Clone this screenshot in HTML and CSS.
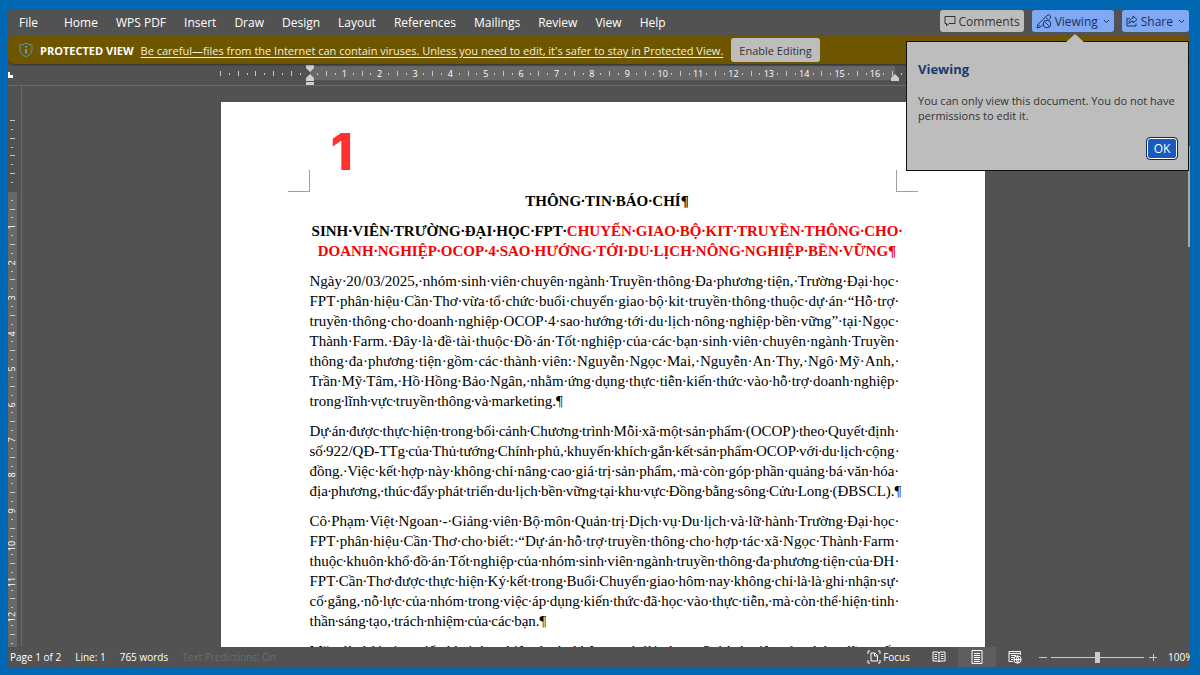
FILE: index.html
```html
<!DOCTYPE html>
<html lang="vi">
<head>
    <meta charset="UTF-8">
    <meta name="viewport" content="width=device-width, initial-scale=1.0">
    <title>Word - Protected View</title>
    <link rel="stylesheet" href="styles.css">
</head>
<body>
    <div class="app">
        <header class="menubar">
            <nav class="tabs">
                <button class="tab tab-file">File</button>
                <button class="tab">Home</button>
                <button class="tab">WPS PDF</button>
                <button class="tab">Insert</button>
                <button class="tab">Draw</button>
                <button class="tab">Design</button>
                <button class="tab">Layout</button>
                <button class="tab">References</button>
                <button class="tab">Mailings</button>
                <button class="tab">Review</button>
                <button class="tab">View</button>
                <button class="tab">Help</button>
            </nav>
            <div class="actions">
                <button class="action">
                    <svg width="12" height="12" viewBox="0 0 12 12"><path d="M1 1.5h10v7H5L2.5 11V8.500H1z"/></svg>
                    Comments
                </button>
                <button class="action blue">
                    <svg width="16" height="16" viewBox="0 0 16 16"><path d="M7 11.500 4.500 14 1 15l1-3.500L11 2.500q1.500-1.500 3 0t0 3L13 6.500M2 11.500 4.500 14M9.500 4l2.500 2.500"/><circle cx="11" cy="11" r="3.800"/><path d="m8.400 8.400 5.200 5.200"/></svg>
                    Viewing
                    <svg class="chevron" width="7" height="7" viewBox="0 0 7 7"><path d="M1 2l2.500 2.500L6 2"/></svg>
                </button>
                <button class="action blue">
                    <svg width="12" height="12" viewBox="0 0 12 12"><path d="M3.500 3.500H1v7.500h9V8.500M7 1l4 3.500L7 8V6Q4.500 6 3 8.500 3.500 3.500 7 3z"/></svg>
                    Share
                    <svg class="chevron" width="7" height="7" viewBox="0 0 7 7"><path d="M1 2l2.500 2.500L6 2"/></svg>
                </button>
                <div class="callout" role="dialog" aria-labelledby="callout-title">
                    <svg class="callout-arrow" width="20" height="9" viewBox="0 0 20 9"><path d="M0 9 10 0l10 9z"/></svg>
                    <h2 class="callout-title" id="callout-title">Viewing</h2>
                    <p class="callout-text">You can only view this document. You do not have permissions to edit it.</p>
                    <button class="ok">OK</button>
                </div>
            </div>
        </header>

        <div class="protected">
            <svg class="shield" width="14" height="16" viewBox="0 0 14 16"><path d="M7 1q3 2 6 2v5q0 4.500-6 7-6-2.500-6-7V3q3 0 6-2z"/><path class="shield-i" d="M7 7v4.500M7 4v1.500"/></svg>
            <strong class="protected-title">PROTECTED VIEW</strong>
            <a class="protected-link" href="#">Be careful—files from the Internet can contain viruses. Unless you need to edit, it's safer to stay in Protected View.</a>
            <button class="enable">Enable Editing</button>
        </div>

        <div class="top-ruler">
            <div class="tab-stop"></div>
            <div class="ruler-track">
                <div class="ruler-active"></div>
                <div class="ruler-marks" id="hruler"></div>
                <svg class="indent indent-left" width="10" height="20" viewBox="0 0 10 20"><path d="M1 0h8v3L5 7 1 3zM5 9l4 4v3H1v-3zM1 17h8v3H1z"/></svg>
                <svg class="indent indent-right" width="10" height="20" viewBox="0 0 10 20"><path d="M5 9l4 4v3H1v-3z"/></svg>
            </div>
        </div>

        <div class="workspace">
            <div class="side-ruler">
                <div class="side-active"></div>
                <div class="side-marks" id="vruler"></div>
            </div>
            <main class="canvas">
                <article class="page">
                    <span class="corner corner-left"></span>
                    <span class="corner corner-right"></span>
                    <span class="page-badge">1</span>

                    <h1 class="doc-title">
                        <span class="title-row"><span class="line last">THÔNG TIN BÁO CHÍ¶</span></span>
                    </h1>
                    <h2 class="doc-title">
                        <span class="title-row">
                            <span class="line last">SINH VIÊN TRƯỜNG ĐẠI HỌC FPT</span>
                            <span class="line last red">CHUYỂN GIAO BỘ KIT TRUYỀN THÔNG CHO</span>
                        </span>
                        <span class="title-row">
                            <span class="line last red">DOANH NGHIỆP OCOP 4 SAO HƯỚNG TỚI DU LỊCH NÔNG NGHIỆP BỀN VỮNG¶</span>
                        </span>
                    </h2>

                    <p class="para">
                        <span class="line">Ngày 20/03/2025, nhóm sinh viên chuyên ngành Truyền thông Đa phương tiện, Trường Đại học</span>
                        <span class="line">FPT phân hiệu Cần Thơ vừa tổ chức buổi chuyển giao bộ kit truyền thông thuộc dự án “Hỗ trợ</span>
                        <span class="line">truyền thông cho doanh nghiệp OCOP 4 sao hướng tới du lịch nông nghiệp bền vững” tại Ngọc</span>
                        <span class="line">Thành Farm. Đây là đề tài thuộc Đồ án Tốt nghiệp của các bạn sinh viên chuyên ngành Truyền</span>
                        <span class="line">thông đa phương tiện gồm các thành viên: Nguyễn Ngọc Mai, Nguyễn An Thy, Ngô Mỹ Anh,</span>
                        <span class="line">Trần Mỹ Tâm, Hồ Hồng Bảo Ngân, nhằm ứng dụng thực tiễn kiến thức vào hỗ trợ doanh nghiệp</span>
                        <span class="line last">trong lĩnh vực truyền thông và marketing.¶</span>
                    </p>
                    <p class="para">
                        <span class="line">Dự án được thực hiện trong bối cảnh Chương trình Mỗi xã một sản phẩm (OCOP) theo Quyết định</span>
                        <span class="line">số 922/QĐ-TTg của Thủ tướng Chính phủ, khuyến khích gắn kết sản phẩm OCOP với du lịch cộng</span>
                        <span class="line">đồng. Việc kết hợp này không chỉ nâng cao giá trị sản phẩm, mà còn góp phần quảng bá văn hóa</span>
                        <span class="line">địa phương, thúc đẩy phát triển du lịch bền vững tại khu vực Đồng bằng sông Cửu Long (ĐBSCL).¶</span>
                    </p>
                    <p class="para">
                        <span class="line">Cô Phạm Việt Ngoan - Giảng viên Bộ môn Quản trị Dịch vụ Du lịch và lữ hành Trường Đại học</span>
                        <span class="line">FPT phân hiệu Cần Thơ cho biết: “Dự án hỗ trợ truyền thông cho hợp tác xã Ngọc Thành Farm</span>
                        <span class="line">thuộc khuôn khổ đồ án Tốt nghiệp của nhóm sinh viên ngành truyền thông đa phương tiện của ĐH</span>
                        <span class="line">FPT Cần Thơ được thực hiện Ký kết trong Buổi Chuyển giao hôm nay không chỉ là là ghi nhận sự</span>
                        <span class="line">cố gắng, nỗ lực của nhóm trong việc áp dụng kiến thức đã học vào thực tiễn, mà còn thể hiện tinh</span>
                        <span class="line last">thần sáng tạo, trách nhiệm của các bạn.¶</span>
                    </p>
                    <p class="para">
                        <span class="line">Mặc dù thời gian triển khai thực hiện dự án không quá dài nhưng 3 thành viên của nhóm đã quyết</span>
                    </p>
                </article>
                <div class="scroll-thumb"></div>
            </main>
        </div>

        <footer class="statusbar">
            <span class="status-item">Page 1 of 2</span>
            <span class="status-item">Line: 1</span>
            <span class="status-item">765 words</span>
            <span class="status-item faded">Text Predictions: On</span>
            <div class="status-right">
                <button class="view-btn focus">
                    <svg width="14" height="14" viewBox="0 0 14 14"><path d="M1 4V1h2M11 1h2v3M1 10v3h2M11 13h2v-3M4 3h4l2.500 2.500V11H4zM7.500 3v3h3"/></svg>
                    Focus
                </button>
                <button class="view-btn" aria-label="Read mode">
                    <svg width="14" height="12" viewBox="0 0 14 12"><path d="M7 2v9M1 1h5l1 1 1-1h5v9H8l-1 1-1-1H1zM2.500 3.500H5M2.500 5.500H5M2.500 7.500H5M9 3.500h2.500M9 5.500h2.500M9 7.500h2.500"/></svg>
                </button>
                <button class="view-btn selected" aria-label="Print layout">
                    <svg width="12" height="14" viewBox="0 0 12 14"><path d="M1 .5h10v13H1zM3 3.500h6M3 5.500h6M3 7.500h6M3 9.500h6M3 11.500h6"/></svg>
                </button>
                <button class="view-btn" aria-label="Web layout">
                    <svg width="14" height="14" viewBox="0 0 14 14"><path d="M5 11.500H1v-10h11.500V5M1 3.500h11M3 5.500h5M3 7.500h3M3 9.500h2"/><circle cx="9.500" cy="9.500" r="3.700"/><path d="M6 9.500h7M9.500 6q-2.500 3.500 0 7 2.500-3.500 0-7"/></svg>
                </button>
                <button class="zoom-btn" aria-label="Zoom out"><svg width="8" height="8" viewBox="0 0 8 8"><path d="M0 4.500h8"/></svg></button>
                <input class="zoom" type="range" min="0" max="100" value="50" aria-label="Zoom">
                <button class="zoom-btn" aria-label="Zoom in"><svg width="8" height="8" viewBox="0 0 8 8"><path d="M0 4.500h8M4.500 1v7"/></svg></button>
                <span class="percent">100%</span>
            </div>
        </footer>
    </div>
    <script src="script.js"></script>
</body>
</html>
```

FILE: styles.css
```css
* {
    box-sizing: border-box;
}

body {
    margin: 0;
    height: 100vh;
    padding: 10px 10px 8px 8px;
    background: #0067b3;
    font-family: "Open Sans", "Noto Sans", sans-serif;
    font-size: 12px;
    color: #fff;
    overflow: hidden;
}

button {
    font: inherit;
    color: inherit;
    background: none;
    border: none;
    padding: 0;
    white-space: nowrap;
}

svg {
    display: block;
    flex: none;
    fill: none;
    stroke: currentColor;
    stroke-width: 1;
}

h1,
h2,
p {
    margin: 0;
}

.app {
    height: 100%;
    display: flex;
    flex-direction: column;
    background: #525252;
    overflow: hidden;
}

/* Menu bar */
.menubar {
    display: flex;
    justify-content: space-between;
    height: 26px;
    flex: none;
}

.tabs {
    display: flex;
    align-items: center;
    gap: 18px;
    height: 24px;
    padding-left: 11px;
}

.tab-file {
    margin-right: 8px;
}

.actions {
    position: relative;
    display: flex;
    gap: 8px;
    padding-right: 1px;
}

.action {
    display: flex;
    align-items: center;
    gap: 3px;
    height: 22px;
    padding: 0 4px;
    background: #bdbdbd;
    color: #333;
    border-radius: 3px;
}

.action.blue {
    background: #7fa8f5;
    color: #1d3157;
}

.chevron {
    margin-left: 2px;
}

/* Callout under the Viewing button */
.callout {
    position: absolute;
    z-index: 5;
    top: 31px;
    right: 1px;
    width: 283px;
    height: 130px;
    padding: 17px 11px 11px;
    display: flex;
    flex-direction: column;
    background: #bdbdbd;
    border: 1px solid #111;
    color: #333;
}

.callout-arrow {
    position: absolute;
    top: -8px;
    right: 103px;
    fill: #bdbdbd;
    stroke: none;
}

.callout-title {
    font-size: 13px;
    line-height: 20px;
    color: #1b3a6b;
}

.callout-text {
    margin-top: 14px;
    font-size: 11px;
    line-height: 15px;
}

.ok {
    align-self: flex-end;
    margin-top: auto;
    width: 30px;
    height: 21px;
    background: #185abd;
    border: 1px solid #fff;
    border-radius: 3px;
    outline: 1px solid #10284f;
    color: #fff;
}

/* Protected view bar */
.protected {
    display: flex;
    align-items: center;
    flex: none;
    height: 28px;
    padding-left: 11px;
    background: #6e5600;
    border-radius: 6px;
    box-shadow: 0 1px 2px #333;
    font-size: 11px;
    white-space: nowrap;
    z-index: 1;
}

.shield {
    color: #5d95a3;
}

.shield-i {
    stroke: #4da3d8;
    stroke-width: 2;
}

.protected-title {
    margin: 0 7px;
}

.protected-link {
    color: #f5efd5;
    text-underline-offset: 2px;
}

.enable {
    height: 24px;
    margin-left: 8px;
    padding: 0 8px;
    background: #bdbdbd;
    color: #333;
    border-radius: 3px;
}

/* Rulers */
.top-ruler {
    display: flex;
    flex: none;
    height: 22px;
    padding: 0 7px 0 14px;
    border-bottom: 1px solid #6a6a6a;
    position: relative;
}

.tab-stop {
    position: absolute;
    left: 0;
    top: 8px;
    width: 5px;
    height: 6px;
    border: solid #fff;
    border-width: 0 0 3px 2px;
}

.ruler-track {
    position: relative;
    width: 764px;
    height: 22px;
    margin: 0 auto;
}

.ruler-active {
    position: absolute;
    left: 89px;
    right: 90px;
    top: 2px;
    height: 14px;
    background: #686868;
}

.ruler-marks {
    position: absolute;
    left: 0;
    width: 682px;
    top: 2px;
    height: 15px;
    display: flex;
    justify-content: space-between;
    align-items: center;
    font-size: 9px;
}

.mark {
    width: 0;
    height: 0;
    display: flex;
    align-items: center;
    justify-content: center;
    line-height: 8px;
}

.tick::before {
    content: "";
    flex: none;
    width: 1px;
    height: 5px;
    background: #c8c8c8;
}

.dot::before {
    content: "";
    flex: none;
    width: 1px;
    height: 2px;
    background: #c8c8c8;
}

.indent {
    position: absolute;
    top: 1px;
    fill: #cfcfcf;
    stroke: none;
}

.indent-left {
    left: 84px;
}

.indent-right {
    right: 85px;
}

.workspace {
    display: flex;
    flex: 1;
    min-height: 0;
}

.side-ruler {
    position: relative;
    flex: none;
    width: 14px;
    border-right: 1px solid #6a6a6a;
    overflow: hidden;
}

.side-active {
    position: absolute;
    left: 0;
    top: 106px;
    bottom: 0;
    width: 9px;
    background: #686868;
}

.side-marks {
    position: absolute;
    left: 4px;
    top: 35px;
    height: 523px;
    display: flex;
    flex-direction: column;
    justify-content: space-between;
    font-size: 9px;
}

.side-marks .mark {
    transform: rotate(-90deg);
}

.canvas {
    position: relative;
    flex: 1;
    min-width: 0;
    padding: 16px 7px 0 0;
    overflow: hidden;
}

.scroll-thumb {
    position: absolute;
    right: 0;
    top: 60px;
    width: 2px;
    height: 101px;
    background: #a8a8a8;
}

/* Document */
.page {
    position: relative;
    width: 764px;
    min-height: 1080px;
    margin: 0 auto;
    padding: 89px 90px 0 89px;
    background: #fff;
    color: #000;
    font-family: "Liberation Serif", "Times New Roman", serif;
    font-size: 15px;
    line-height: 20px;
}

.corner {
    position: absolute;
    top: 68px;
    width: 22px;
    height: 22px;
    border: solid #a0a0a0;
    border-width: 0 1px 1px 0;
}

.corner-left {
    left: 67px;
}

.corner-right {
    right: 67px;
    border-width: 0 0 1px 1px;
}

.page-badge {
    position: absolute;
    left: 110px;
    top: 24px;
    font-family: Inter, sans-serif;
    font-size: 51px;
    font-weight: 800;
    line-height: 52px;
    color: #ff3030;
}

.doc-title {
    margin-bottom: 10px;
    font-size: 15px;
    font-weight: bold;
}

.title-row {
    display: flex;
    justify-content: center;
    margin: 0 -10px 0 0;
}

.red {
    color: #f80000;
}

.para {
    margin-bottom: 10px;
}

.line {
    display: flex;
    white-space: nowrap;
}

.space {
    flex: 1 1 0;
    min-width: 0;
    display: flex;
    justify-content: center;
}

.space.trailing {
    flex: none;
    width: 0;
    justify-content: flex-start;
}

.last .space {
    flex: none;
    width: 3px;
    justify-content: center;
}

.title-row .space {
    width: 4px;
}

/* Status bar */
.statusbar {
    display: flex;
    align-items: center;
    flex: none;
    height: 20px;
    padding-left: 2px;
    gap: 14px;
    font-size: 10px;
    white-space: nowrap;
}

.faded {
    color: #6c6c6c;
}

.status-right {
    display: flex;
    align-items: center;
    align-self: stretch;
    margin-left: auto;
}

.view-btn {
    display: flex;
    align-items: center;
    justify-content: center;
    gap: 2px;
    width: 38px;
    height: 20px;
}

.focus {
    width: auto;
    margin-right: 10px;
}

.selected {
    background: #5e5e5e;
}

.zoom-btn {
    width: 8px;
    color: #ccc;
    margin-left: 5px;
}

.zoom {
    appearance: none;
    width: 93px;
    height: 12px;
    margin: 0 0 0 4px;
    background: linear-gradient(#ccc, #ccc) center / 100% 1px no-repeat;
}

.zoom::-webkit-slider-thumb {
    appearance: none;
    width: 5px;
    height: 11px;
    background: #ccc;
}

.percent {
    width: 22px;
    margin-left: 11px;
}
```

FILE: script.js
```js
// ruler marks: four per centimetre, a number on each whole one
function drawRuler(id, from, to) {
    const ruler = document.getElementById(id);
    for (let i = from; i <= to; i++) {
        const mark = document.createElement('span');
        mark.className = 'mark';
        if (i > 0 && i % 4 === 0) {
            mark.textContent = i / 4;
        } else if (i !== 0) {
            mark.classList.add(i % 2 === 0 ? 'tick' : 'dot');
        }
        ruler.appendChild(mark);
    }
}

drawRuler('hruler', -10, 67);
drawRuler('vruler', -8, 51);

function addSpan(line, text, className) {
    const span = document.createElement('span');
    span.textContent = text;
    span.className = className;
    line.appendChild(span);
}

// show spaces as formatting marks, centred in the justified gap;
// the mark that ends a full line hangs in the right margin
document.querySelectorAll('.line').forEach(line => {
    const isLast = line.classList.contains('last');
    let text = line.textContent;
    let endMark = '·';
    if (text.endsWith('¶')) {
        endMark = isLast ? '' : '¶';
        if (!isLast) text = text.slice(0, -1);
    }
    const words = text.split(' ');
    line.textContent = '';
    words.forEach((word, i) => {
        addSpan(line, word, 'word');
        if (i < words.length - 1) {
            addSpan(line, '·', 'space');
        } else if (endMark) {
            addSpan(line, endMark, 'space trailing');
        }
    });
});
```
